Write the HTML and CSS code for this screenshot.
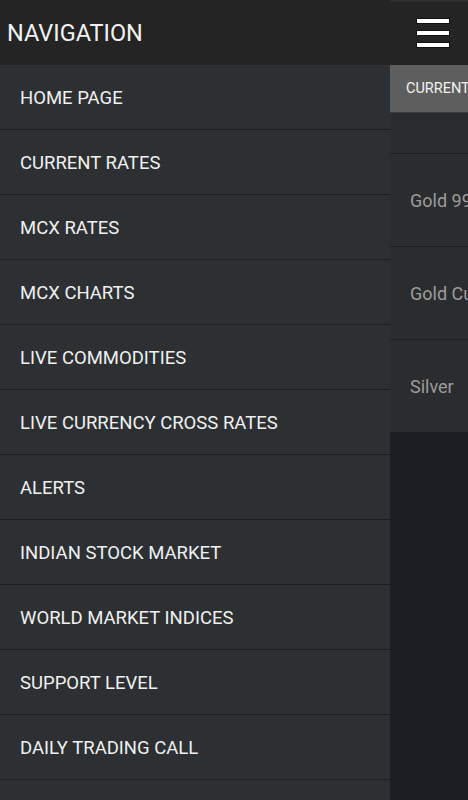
FILE: index.html
```html
<!DOCTYPE html>
<html lang="en">
<head>
    <meta charset="UTF-8">
    <meta name="viewport" content="width=device-width, initial-scale=1.0">
    <title>Bullion Rates - Navigation</title>
    <link rel="stylesheet" href="styles.css">
</head>
<body>
    <div class="screen">
        <aside class="drawer">
            <header class="drawer-header">NAVIGATION</header>
            <nav class="drawer-list">
                <a class="drawer-item" href="#">HOME PAGE</a>
                <a class="drawer-item" href="#">CURRENT RATES</a>
                <a class="drawer-item" href="#">MCX RATES</a>
                <a class="drawer-item" href="#">MCX CHARTS</a>
                <a class="drawer-item" href="#">LIVE COMMODITIES</a>
                <a class="drawer-item" href="#">LIVE CURRENCY CROSS RATES</a>
                <a class="drawer-item" href="#">ALERTS</a>
                <a class="drawer-item" href="#">INDIAN STOCK MARKET</a>
                <a class="drawer-item" href="#">WORLD MARKET INDICES</a>
                <a class="drawer-item" href="#">SUPPORT LEVEL</a>
                <a class="drawer-item" href="#">DAILY TRADING CALL</a>
            </nav>
        </aside>

        <main class="content">
            <div class="app-bar">
                <button class="menu-button" aria-label="Menu">
                    <span class="menu-bar"></span>
                    <span class="menu-bar"></span>
                    <span class="menu-bar"></span>
                </button>
            </div>
            <div class="tab">CURRENT RATES</div>
            <div class="rate-list">
                <div class="rate-row rate-row-empty"></div>
                <div class="rate-row">Gold 999</div>
                <div class="rate-row">Gold Custom</div>
                <div class="rate-row">Silver</div>
            </div>
            <div class="content-fill"></div>
        </main>
    </div>
</body>
</html>
```

FILE: styles.css
```css
* {
    margin: 0;
    padding: 0;
    box-sizing: border-box;
}

body {
    font-family: Roboto, 'Noto Sans', sans-serif;
    background-color: #1b1e23;
    color: #ffffff;
    overflow: hidden;
}

.screen {
    display: flex;
    width: 468px;
    height: 800px;
    overflow: hidden;
}

/* Navigation drawer */
.drawer {
    width: 390px;
    flex-shrink: 0;
    background-color: #2d3032;
    display: flex;
    flex-direction: column;
}

.drawer-header {
    height: 65px;
    flex-shrink: 0;
    background-color: #242424;
    display: flex;
    align-items: center;
    padding-left: 7px;
    font-size: 23.5px;
    color: #f2f2f2;
}

.drawer-list {
    display: flex;
    flex-direction: column;
}

.drawer-item {
    height: 65px;
    flex-shrink: 0;
    display: flex;
    align-items: center;
    padding-left: 20px;
    padding-top: 1px;
    border-bottom: 1px solid #1d1e20;
    color: #f0f0f0;
    font-size: 18.5px;
    text-decoration: none;
    white-space: nowrap;
}

/* Main content behind the drawer */
.content {
    flex: 1;
    min-width: 0;
    display: flex;
    flex-direction: column;
    overflow: hidden;
}

.app-bar {
    height: 65px;
    flex-shrink: 0;
    background-color: #242424;
    border-top: 2px solid #2e2e2e;
    display: flex;
    align-items: center;
    justify-content: flex-end;
    padding-right: 18px;
}

.menu-button {
    width: 34px;
    display: flex;
    flex-direction: column;
    gap: 6px;
    background: transparent;
    border: none;
    margin-top: -1px;
}

.menu-bar {
    display: block;
    height: 6px;
    background-color: #ffffff;
    border: 1px solid #111111;
}

.tab {
    height: 48px;
    flex-shrink: 0;
    background-color: #5e5e5e;
    border-bottom: 1px solid #3c3c3c;
    display: flex;
    align-items: center;
    padding-left: 16px;
    font-size: 14.5px;
    color: #f2f2f2;
    white-space: nowrap;
}

.rate-list {
    flex-shrink: 0;
    background-color: #2b2c2e;
}

.rate-row {
    height: 93px;
    display: flex;
    align-items: center;
    padding-left: 20px;
    border-top: 1px solid #1e1f20;
    color: #9c9c9c;
    font-size: 18px;
    white-space: nowrap;
}

.rate-row-empty {
    height: 40px;
    border-top: none;
}

.content-fill {
    flex: 1;
    background-color: #1b1e23;
}
```
